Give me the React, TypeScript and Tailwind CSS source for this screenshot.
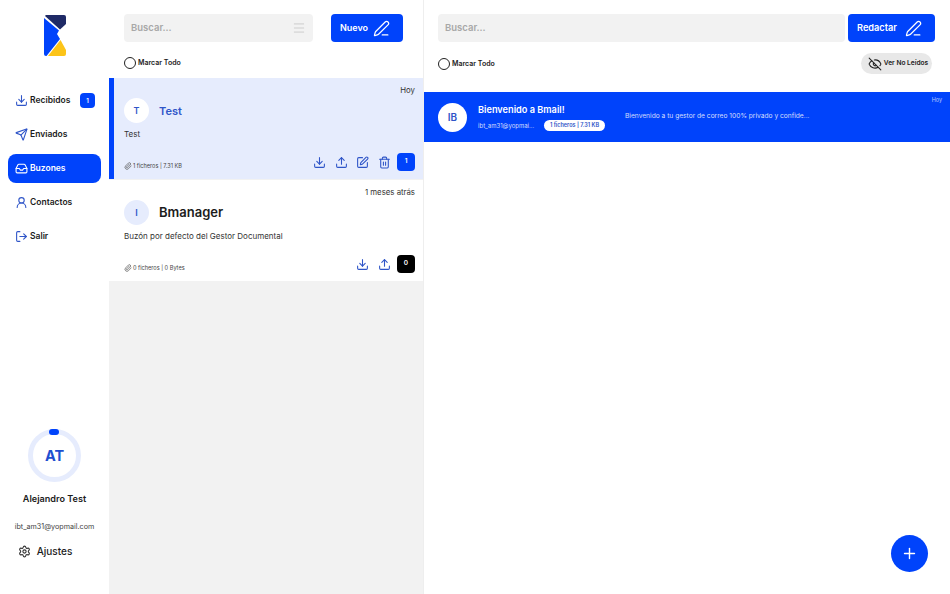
import React from 'react'
import {
  Download,
  Upload,
  Send,
  Inbox,
  UserRound,
  LogOut,
  Settings,
  Paperclip,
  PenLine,
  SquarePen,
  Trash2,
  EyeOff,
  Plus,
  Menu,
} from 'lucide-react'

const NavItem = ({ icon, label, active, badge }: { icon: React.ReactNode; label: string; active?: boolean; badge?: string }) => (
  <div className={`flex items-center h-[29px] w-[93px] pl-[7px] pr-[6px] rounded-[8px] ${active ? 'bg-[#0043fb] text-white' : 'text-[#1c1c1c]'}`}>
    <span className={active ? 'text-white' : 'text-[#2f55c8]'}>{icon}</span>
    <span className="ml-[2px] text-[8.5px] font-semibold flex-1">{label}</span>
    {badge && (
      <span className="w-[15px] h-[15px] bg-[#0043fb] rounded-[4px] text-white text-[6px] font-semibold flex items-center justify-center">
        {badge}
      </span>
    )}
  </div>
)

const SearchBar = ({ withMenu, className }: { withMenu?: boolean; className: string }) => (
  <div className={`h-[28px] bg-[#f2f2f2] rounded-[4px] flex items-center justify-between pl-[7px] pr-[7px] ${className}`}>
    <span className="text-[9.5px] font-semibold text-[#a8a8a8]">Buscar...</span>
    {withMenu && <Menu size={14} strokeWidth={1.5} className="text-[#c8c8c8]" />}
  </div>
)

const Radio = () => <span className="w-[12px] h-[12px] rounded-full border-[1.2px] border-[#222] block" />

const MailboxCard = ({
  initial,
  title,
  titleClass,
  desc,
  files,
  date,
  count,
  active,
}: {
  initial: string
  title: string
  titleClass: string
  desc: string
  files: string
  date: string
  count: string
  active?: boolean
}) => (
  <div className={`h-[101px] mb-[1px] pr-[8px] pt-[7px] flex flex-col ${active ? 'bg-[#e6ecfd] border-l-[5px] border-[#0043fb] pl-[10px]' : 'bg-white pl-[15px]'}`}>
    <div className="text-right text-[7.8px] leading-[10px] text-[#333]">{date}</div>
    <div className="flex items-center mt-[3px]">
      <div className={`w-[25px] h-[25px] rounded-full flex items-center justify-center text-[9px] font-semibold text-[#2f55c8] ${active ? 'bg-white' : 'bg-[#e6ecfd]'}`}>
        {initial}
      </div>
      <span className={`ml-[10px] font-semibold ${titleClass}`}>{title}</span>
    </div>
    <div className="text-[8px] leading-[10px] text-[#333] mt-[6px]">{desc}</div>
    <div className="flex items-center justify-between mt-auto mb-[8px]">
      <div className="flex items-center gap-[1px] text-[5.6px] text-[#444] mt-[8px]">
        <Paperclip size={8} className="text-[#555]" />
        {files}
      </div>
      <div className="flex items-center gap-[8.5px] text-[#2f55c8]">
        <Download size={13} />
        <Upload size={13} />
        {active && <SquarePen size={13} />}
        {active && <Trash2 size={13} />}
        <span className={`ml-[-2px] w-[18px] h-[18px] rounded-[4px] text-white text-[6.5px] font-semibold flex items-center justify-center ${active ? 'bg-[#0043fb]' : 'bg-black'}`}>
          {count}
        </span>
      </div>
    </div>
  </div>
)

const App = () => {
  return (
    <div className="w-[950px] h-[594px] flex bg-white overflow-hidden" style={{ fontFamily: 'Inter, "Noto Sans", sans-serif' }}>
      {/* sidebar */}
      <aside className="w-[109px] h-full flex flex-col items-center shrink-0">
        <svg width="22" height="41" viewBox="0 0 22 41" className="mt-[15px]">
          <path d="M2 0H20a2 2 0 0 1 2 2V9L16 14.5 1 1a2 2 0 0 1 1-1z" fill="#1f2a66" />
          <path d="M0 3L15 15.5 13 19 16 24 2.5 41H2a2 2 0 0 1-2-2z" fill="#0043fb" />
          <path d="M16.5 25L22 35V39a2 2 0 0 1-2 2H4z" fill="#fcc419" />
        </svg>
        <nav className="mt-[30px] flex flex-col gap-[5px]">
          <NavItem icon={<Download size={13} />} label="Recibidos" badge="1" />
          <NavItem icon={<Send size={13} />} label="Enviados" />
          <NavItem icon={<Inbox size={13} />} label="Buzones" active />
          <NavItem icon={<UserRound size={13} />} label="Contactos" />
          <NavItem icon={<LogOut size={13} />} label="Salir" />
        </nav>
        <div className="mt-auto flex flex-col items-center pb-[35px]">
          <div className="relative w-[53px] h-[53px] rounded-full border-[5px] border-[#e6ecfd] flex items-center justify-center">
            <span className="text-[14.5px] font-bold text-[#1f4fd0]">AT</span>
            <span className="absolute top-[-5px] left-[16px] w-[10px] h-[6px] rounded-full bg-[#0043fb]" />
          </div>
          <div className="mt-[10px] text-[9.1px] font-semibold text-[#1c1c1c] leading-[14px]">Alejandro Test</div>
          <div className="mt-[16px] text-[7.2px] text-[#444] leading-[10px]">ibt_am31@yopmail.com</div>
          <div className="mt-[12px] flex items-center self-start ml-[3px]">
            <Settings size={13} className="text-[#333]" />
            <span className="ml-[6px] text-[10px] font-medium text-[#1c1c1c]">Ajustes</span>
          </div>
        </div>
      </aside>

      {/* mailboxes */}
      <section className="w-[315px] h-full bg-[#f2f2f2] border-r border-[#eeeeee] flex flex-col shrink-0">
        <div className="h-[78px] bg-white pt-[14px] pl-[15px]">
          <div className="flex">
            <SearchBar withMenu className="w-[189px]" />
            <button className="ml-[18px] w-[72px] h-[28px] rounded-[4px] bg-[#0043fb] text-white text-[9px] font-semibold flex items-center pl-[9px] gap-[5px]">
              Nuevo
              <PenLine size={17} strokeWidth={1.7} />
            </button>
          </div>
          <div className="flex items-center gap-[2px] mt-[15px]">
            <Radio />
            <span className="text-[7px] font-semibold text-[#1c1c1c] mt-[1px]">Marcar Todo</span>
          </div>
        </div>
        <MailboxCard initial="T" title="Test" titleClass="text-[11px] text-[#2f55c8] mt-[1px]" desc="Test" files="1 ficheros | 7.31 KB" date="Hoy" count="1" active />
        <MailboxCard initial="I" title="Bmanager" titleClass="text-[13px] text-[#1c1c1c]" desc="Buzón por defecto del Gestor Documental" files="0 ficheros | 0 Bytes" date="1 meses atrás" count="0" />
      </section>

      {/* messages */}
      <section className="flex-1 h-full relative">
        <div className="pt-[14px] pl-[14px] pr-[15px]">
          <div className="flex gap-[3px]">
            <SearchBar className="flex-1" />
            <button className="w-[87px] h-[28px] rounded-[4px] bg-[#0043fb] text-white text-[9.2px] font-semibold flex items-center pl-[9px] gap-[8px]">
              Redactar
              <PenLine size={17} strokeWidth={1.7} />
            </button>
          </div>
          <div className="flex items-center justify-between mt-[11px]">
            <div className="flex items-center gap-[2px]">
              <Radio />
              <span className="text-[7px] font-semibold text-[#1c1c1c] mt-[1px]">Marcar Todo</span>
            </div>
            <div className="mr-[3px] w-[71px] h-[21px] rounded-full bg-[#e8e8e8] flex items-center justify-center pl-[3px] gap-[2px] text-[#222]">
              <EyeOff size={14} strokeWidth={1.8} />
              <span className="text-[6.6px] font-semibold">Ver No Leídos</span>
            </div>
          </div>
        </div>
        <div className="mt-[18px] h-[50px] bg-[#0043fb] flex items-center pl-[14px] pr-[2px] text-white relative">
          <div className="w-[29px] h-[29px] rounded-full bg-white text-[#2f55c8] text-[10px] font-semibold flex items-center justify-center">IB</div>
          <div className="ml-[11px] w-[142px]">
            <div className="text-[9.2px] font-semibold leading-[14px]">Bienvenido a Bmail!</div>
            <div className="flex items-center mt-[3px]">
              <span className="text-[6px] text-[#d5defb] w-[66px]">ibt_am31@yopmai...</span>
              <span className="h-[11px] w-[61px] rounded-full bg-white text-[#2f55c8] text-[5.5px] font-semibold flex items-center justify-center">1 ficheros | 7.31 KB</span>
            </div>
          </div>
          <span className="ml-[5px] mt-[-1px] text-[6.65px] text-[#d5defb]">Bienvenido a tu gestor de correo 100% privado y confide...</span>
          <span className="absolute top-[4px] right-[8px] text-[5.5px] text-[#b9c9fb]">Hoy</span>
        </div>
        <button className="absolute right-[22px] bottom-[22px] w-[37px] h-[37px] rounded-full bg-[#0043fb] text-white flex items-center justify-center">
          <Plus size={17} strokeWidth={2} />
        </button>
      </section>
    </div>
  )
}

export default App
